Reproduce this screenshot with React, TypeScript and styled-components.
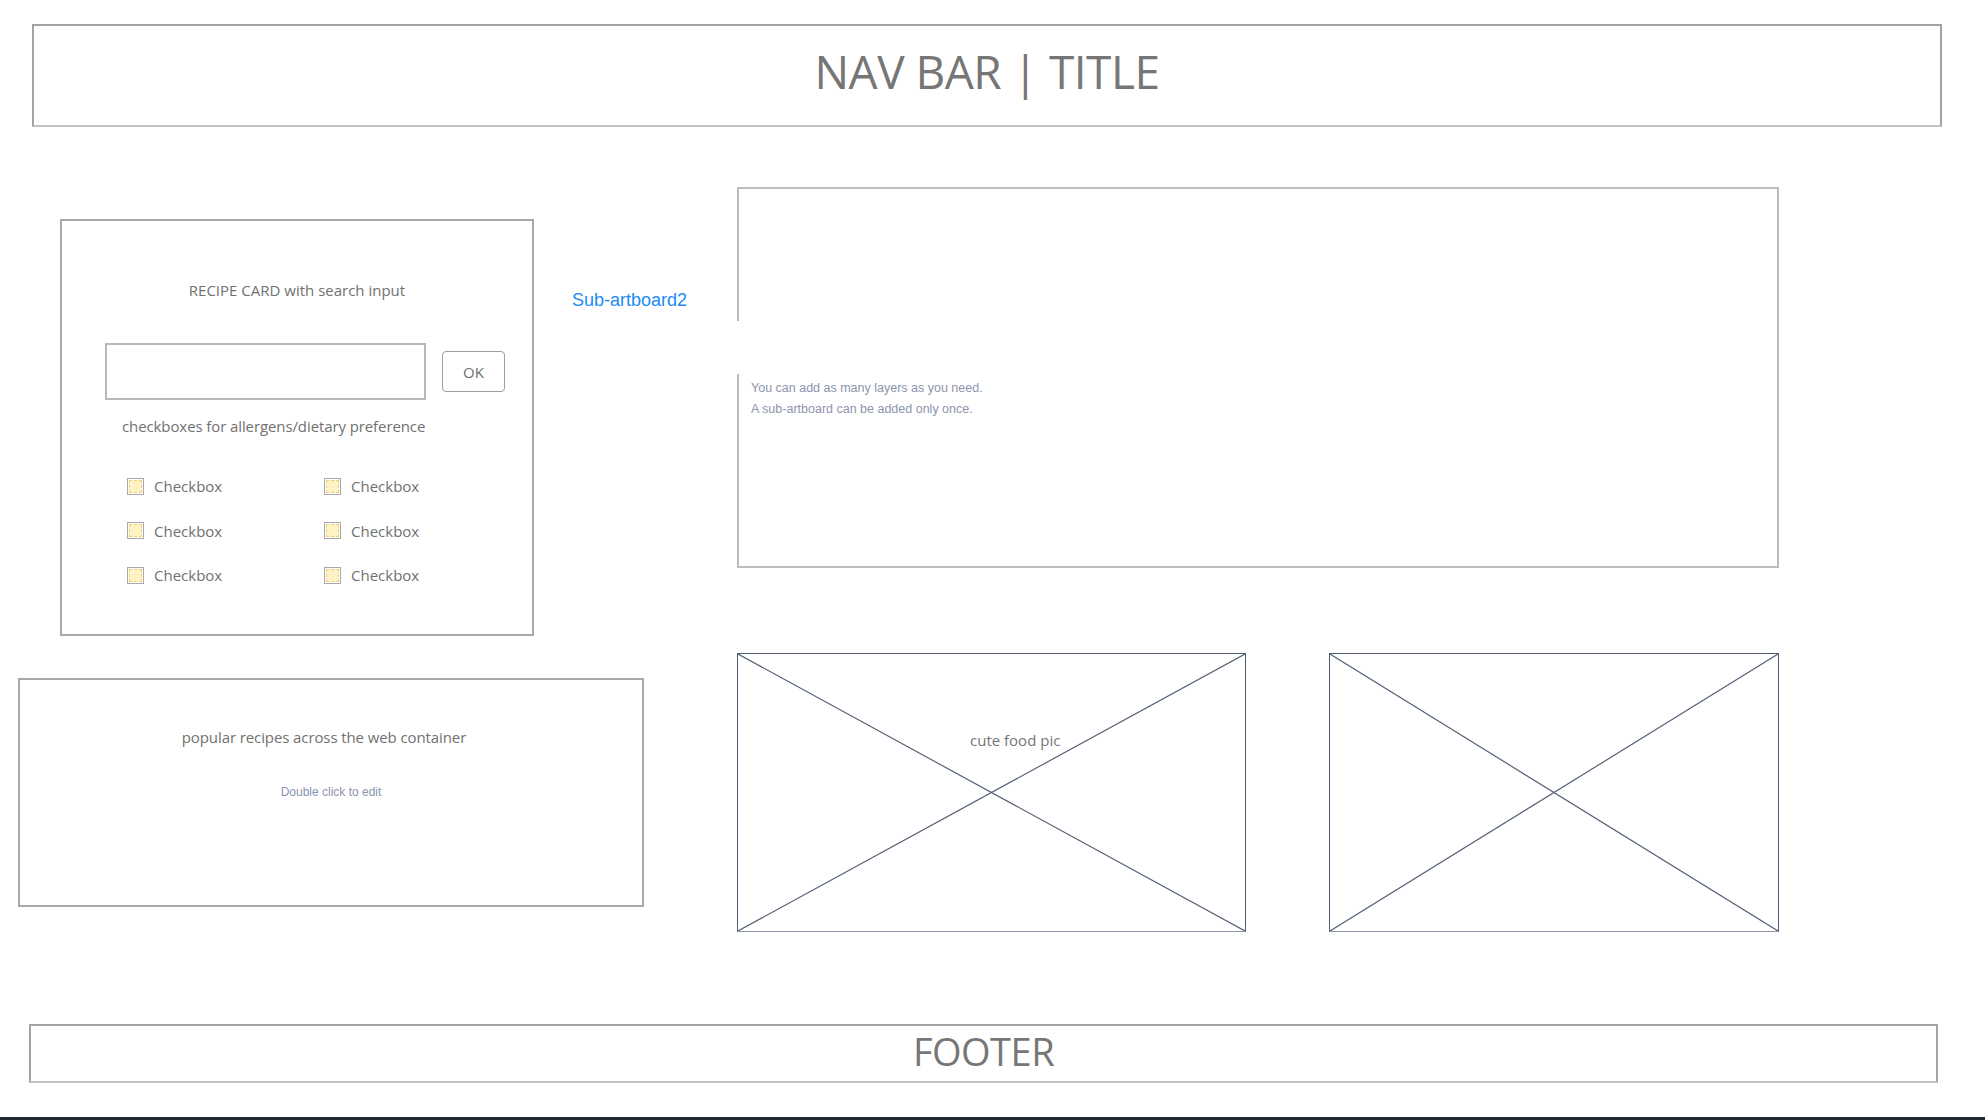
import * as React from "react";
import styled, { createGlobalStyle } from "styled-components";

const GlobalStyle = createGlobalStyle`
  html, body {
    margin: 0;
    padding: 0;
    background: #fff;
  }
  body {
    font-family: "Open Sans", "Noto Sans", sans-serif;
    color: #717171;
    overflow: hidden;
  }
`;

const SPage = styled.div`
  width: 1985px;
  height: 1120px;
  display: flex;
  flex-direction: column;
  overflow: hidden;
  & > * {
    flex-shrink: 0;
  }
`;

const SBar = styled.div<{ left: number; right: number; height: number; size: number }>`
  margin: 0 ${({ right }) => right}px 0 ${({ left }) => left}px;
  height: ${({ height }) => height}px;
  box-sizing: border-box;
  border: 2px solid #a3a3a3;
  border-bottom-color: #c4c4c4;
  display: flex;
  align-items: center;
  justify-content: center;
  font-size: ${({ size }) => size}px;
  color: #767676;
  letter-spacing: -0.5px;
`;

const SNav = styled(SBar)`
  margin-top: 24px;
  padding-bottom: 10px;
`;

const SFooter = styled(SBar)`
  margin-top: 92px;
  padding-bottom: 5px;
`;

const SStrip = styled.div`
  margin-top: 34px;
  height: 3px;
  background: #1f2a36;
`;

const SRow = styled.div<{ height: number }>`
  display: flex;
  align-items: flex-start;
  height: ${({ height }) => height}px;
`;

const SRecipeCard = styled.div`
  margin: 92px 0 0 60px;
  width: 474px;
  height: 417px;
  box-sizing: border-box;
  border: 2px solid #a8a8a8;
  display: flex;
  flex-direction: column;
  align-items: flex-start;
  font-size: 15px;
`;

const SCardTitle = styled.div`
  align-self: center;
  margin-top: 59px;
  line-height: 20px;
`;

const SSearchRow = styled.div`
  display: flex;
  align-items: center;
  margin: 43px 0 0 43px;
`;

const SInput = styled.input`
  width: 321px;
  height: 57px;
  box-sizing: border-box;
  border: 2px solid #b8b8b8;
  outline: none;
  padding: 0 10px;
`;

const SOkButton = styled.button`
  margin-left: 16px;
  width: 63px;
  height: 41px;
  box-sizing: border-box;
  border: 1px solid #9e9e9e;
  border-radius: 4px;
  background: #fff;
  color: #6e6e6e;
  font-family: "Open Sans", sans-serif;
  font-size: 15px;
`;

const SPrefText = styled.div`
  margin: 16px 0 0 60px;
  line-height: 20px;
  letter-spacing: -0.1px;
`;

const SCheckGrid = styled.div`
  display: grid;
  grid-template-columns: 197px 150px;
  row-gap: 24.5px;
  margin: 40px 0 0 65px;
`;

const SCheckItem = styled.label`
  display: flex;
  align-items: center;
  gap: 10px;
  height: 20px;
`;

const SCheckBox = styled.span`
  width: 17px;
  height: 17px;
  box-sizing: border-box;
  border: 1px solid #a9a9a9;
  padding: 1px;
  display: flex;
`;

const SCheckFill = styled.span`
  flex: 1;
  background: #fff3c4;
  border: 1px dashed #f0cf7c;
`;

const SLabelCol = styled.div`
  width: 203px;
  margin-top: 163px;
  padding-left: 38px;
  box-sizing: border-box;
  font-family: "Liberation Sans", Arial, sans-serif;
  font-size: 18px;
  color: #1c8cf5;
`;

const SArtboard = styled.div`
  position: relative;
  margin-top: 60px;
  width: 1042px;
  height: 381px;
  box-sizing: border-box;
  border: 2px solid #bdbdbd;
  padding: 189px 0 0 12px;
  font-family: "Liberation Sans", Arial, sans-serif;
  font-size: 12.5px;
  line-height: 21px;
  color: #8d94ad;
`;

const SMask = styled.div`
  position: absolute;
  left: -2px;
  top: 132px;
  width: 310px;
  height: 53px;
  background: #fff;
`;

const SPopular = styled.div`
  margin: 42px 0 0 18px;
  width: 626px;
  height: 229px;
  box-sizing: border-box;
  border: 2px solid #a8a8a8;
  display: flex;
  flex-direction: column;
  align-items: center;
`;

const SPopularTitle = styled.div`
  margin: 47px 0 0 -14px;
  font-size: 15px;
  line-height: 20px;
  letter-spacing: -0.1px;
`;

const SHint = styled.div`
  margin-top: 38px;
  font-family: "Liberation Sans", Arial, sans-serif;
  font-size: 12px;
  color: #8a93b0;
`;

const SImage = styled.div<{ gap: number; width: number }>`
  position: relative;
  margin: 17px 0 0 ${({ gap }) => gap}px;
  width: ${({ width }) => width}px;
  height: 279px;
  box-sizing: border-box;
  border: 1.5px solid #4f5a75;
  border-bottom-color: #8e96a8;
  & svg {
    display: block;
    width: 100%;
    height: 100%;
  }
`;

const SImageCaption = styled.div`
  position: absolute;
  left: 232px;
  top: 76px;
  font-size: 15px;
  color: #767676;
`;

const Placeholder = ({ gap, width, caption }: { gap: number; width: number; caption?: string }) => (
  <SImage gap={gap} width={width}>
    <svg viewBox="0 0 100 100" preserveAspectRatio="none">
      <line x1="0" y1="0" x2="100" y2="100" stroke="#56617a" strokeWidth="1.2" vectorEffect="non-scaling-stroke" />
      <line x1="100" y1="0" x2="0" y2="100" stroke="#56617a" strokeWidth="1.2" vectorEffect="non-scaling-stroke" />
    </svg>
    {caption && <SImageCaption>{caption}</SImageCaption>}
  </SImage>
);

const checks = ["Checkbox", "Checkbox", "Checkbox", "Checkbox", "Checkbox", "Checkbox"];

const App = () => (
  <>
    <GlobalStyle />
    <SPage>
      <SNav left={32} right={43} height={103} size={46}>
        NAV BAR | TITLE
      </SNav>

      <SRow height={509}>
        <SRecipeCard>
          <SCardTitle>RECIPE CARD with search input</SCardTitle>
          <SSearchRow>
            <SInput />
            <SOkButton>OK</SOkButton>
          </SSearchRow>
          <SPrefText>checkboxes for allergens/dietary preference</SPrefText>
          <SCheckGrid>
            {checks.map((c, i) => (
              <SCheckItem key={i}>
                <SCheckBox>
                  <SCheckFill />
                </SCheckBox>
                {c}
              </SCheckItem>
            ))}
          </SCheckGrid>
        </SRecipeCard>
        <SLabelCol>Sub-artboard2</SLabelCol>
        <SArtboard>
          <SMask />
          <div>You can add as many layers as you need.</div>
          <div>A sub-artboard can be added only once.</div>
        </SArtboard>
      </SRow>

      <SRow height={296}>
        <SPopular>
          <SPopularTitle>popular recipes across the web container</SPopularTitle>
          <SHint>Double click to edit</SHint>
        </SPopular>
        <Placeholder gap={93} width={509} caption="cute food pic" />
        <Placeholder gap={83} width={450} />
      </SRow>

      <SFooter left={29} right={47} height={59} size={38}>
        FOOTER
      </SFooter>
      <SStrip />
    </SPage>
  </>
);

export default App;
